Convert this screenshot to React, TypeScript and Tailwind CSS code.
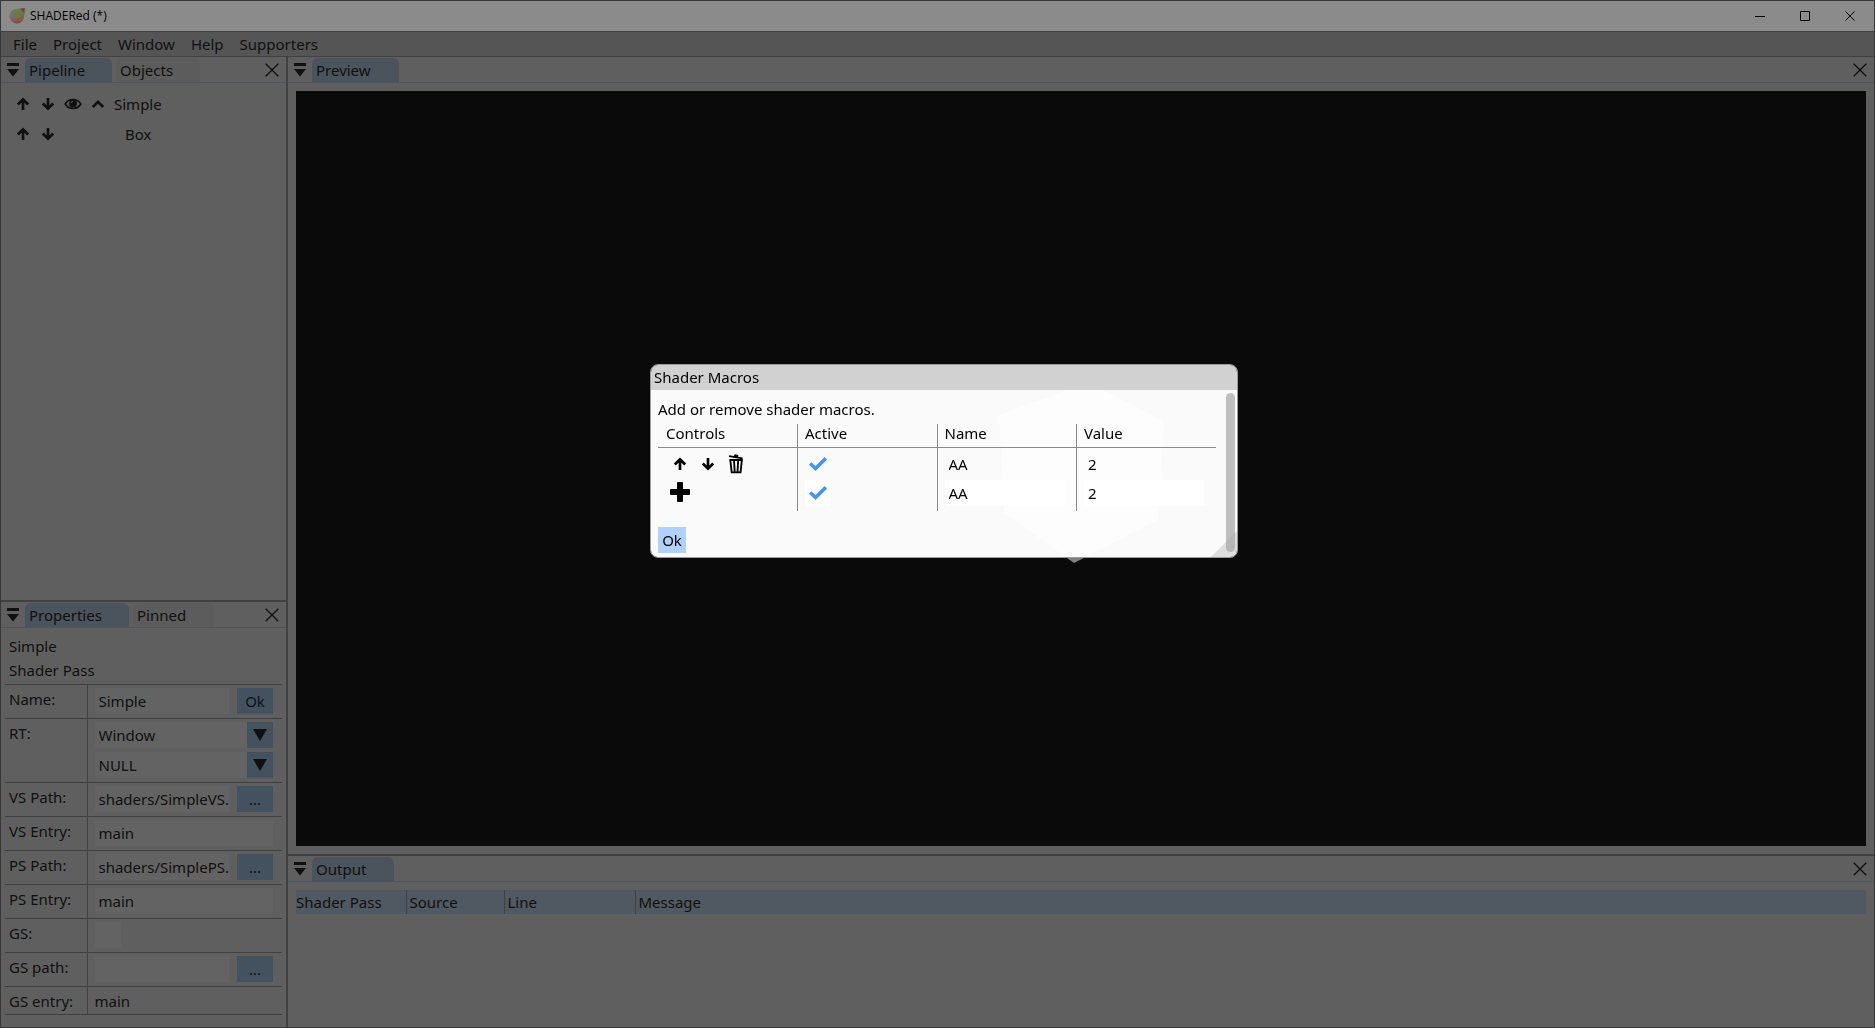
import React from "react";

type IconProps = { className?: string };

const ArrowUp = ({ className = "" }: IconProps) => (
  <svg viewBox="0 0 14 14" className={className} fill="none" stroke="currentColor" strokeWidth="2.7" aria-hidden="true">
    <path d="M7 13V2.500M1.800 7.500 7 2.300l5.200 5.200" />
  </svg>
);

const ArrowDown = ({ className = "" }: IconProps) => (
  <svg viewBox="0 0 14 14" className={className} fill="none" stroke="currentColor" strokeWidth="2.7" aria-hidden="true">
    <path d="M7 1v10.500M1.800 6.500 7 11.700l5.200-5.200" />
  </svg>
);

const Eye = ({ className = "" }: IconProps) => (
  <svg viewBox="0 0 18 12" className={className} aria-hidden="true">
    <path d="M1.2 6C3 3 5.8 1.5 9 1.5S15 3 16.8 6C15 9 12.2 10.5 9 10.5S3 9 1.2 6Z" fill="none" stroke="currentColor" strokeWidth="1.7" />
    <circle cx="9" cy="5.4" r="3.9" fill="currentColor" />
    <path d="M7 5.2A2 2 0 0 1 9 3.3" fill="none" stroke="#5f5f5f" strokeWidth="1" />
  </svg>
);

const ChevronUp = ({ className = "" }: IconProps) => (
  <svg viewBox="0 0 14 14" className={className} fill="none" stroke="currentColor" strokeWidth="2.7" aria-hidden="true">
    <path d="M1.8 10 7 4.8 12.2 10" />
  </svg>
);

const Trash = ({ className = "" }: IconProps) => (
  <svg viewBox="0 0 16 20" className={className} aria-hidden="true">
    <path d="M1 2.2 14.6 4.4M6.2 1.2l4 .7" fill="none" stroke="currentColor" strokeWidth="1.8" />
    <path d="M1.4 6h13.4M2.3 6l1.4 12.4h8.8L13.9 6M6 6l.7 12M10.2 6l-.7 12" fill="none" stroke="currentColor" strokeWidth="1.9" />
  </svg>
);

const Plus = ({ className = "" }: IconProps) => (
  <svg viewBox="0 0 20 20" className={className} fill="currentColor" aria-hidden="true">
    <path d="M8 0h4q1 0 1 1v6h6q1 0 1 1v4q0 1-1 1h-6v6q0 1-1 1H8q-1 0-1-1v-6H1q-1 0-1-1V8q0-1 1-1h6V1q0-1 1-1Z" />
  </svg>
);

const Cross = ({ className = "" }: IconProps) => (
  <svg viewBox="0 0 14 14" className={className} fill="none" stroke="currentColor" strokeWidth="1.3" aria-hidden="true">
    <path d="M.7.7l12.6 12.6M13.3.7.7 13.3" />
  </svg>
);

const DockMenu = ({ className = "" }: IconProps) => (
  <svg viewBox="0 0 12 14" className={className} fill="currentColor" aria-hidden="true">
    <path d="M0 0h12v3H0zM0 6h12L6 13.5z" />
  </svg>
);

const Logo = ({ className = "" }: IconProps) => (
  <svg viewBox="0 0 16 16" className={className} aria-hidden="true">
    <defs>
      <linearGradient id="logoBase" x1="0" y1="0.7" x2="1" y2="0.4">
        <stop offset="0" stopColor="#8a5590" />
        <stop offset="0.5" stopColor="#85604e" />
        <stop offset="1" stopColor="#6f6420" />
      </linearGradient>
      <linearGradient id="logoTop" x1="0.3" y1="0" x2="0.5" y2="1">
        <stop offset="0" stopColor="#4f9152" />
        <stop offset="0.5" stopColor="#5f8a52" stopOpacity="0.4" />
        <stop offset="1" stopColor="#8c3a2c" stopOpacity="0.7" />
      </linearGradient>
    </defs>
    <path d="M8 1c3-.2 5-.4 7.800-1C15.900 3 15.500 5 15 8a7.200 7.200 0 1 1-7-7Z" fill="url(#logoBase)" />
    <path d="M8 1c3-.2 5-.4 7.800-1C15.900 3 15.500 5 15 8a7.200 7.200 0 1 1-7-7Z" fill="url(#logoTop)" />
    <path d="M11 .8 15.800 0 15.300 5Z" fill="#7a4038" />
  </svg>
);

function TabBar({ tabs, name }: { tabs: { label: string; width: string }[]; name: string }) {
  return (
    <div className="flex h-[26px] shrink-0 items-end border-b border-[#4d565f] pl-1.5">
      <button aria-label={`${name} dock menu`} className="mr-1.5 flex h-6 w-3 items-center justify-center">
        <DockMenu className="h-3.5 w-3" />
      </button>
      <div className="flex gap-1" role="tablist">
        {tabs.map((t, i) => (
          <button
            key={t.label}
            role="tab"
            aria-selected={i === 0}
            className={`h-6 rounded-t-md pl-1 text-left ${t.width} ${i === 0 ? "bg-[#4b535d]" : "bg-[#5c5c5c]"}`}
          >
            {t.label}
          </button>
        ))}
      </div>
      <button aria-label={`Close ${name}`} className="mr-[7px] ml-auto flex h-6 w-3.5 items-center justify-center">
        <Cross className="size-3.5" />
      </button>
    </div>
  );
}

function PropRow({ label, children }: { label: string; children: React.ReactNode }) {
  return (
    <tr className="border-t border-[#414141] align-top">
      <th scope="row" className="border-r border-[#414141] pt-1 pl-1 text-left leading-5 font-normal">{label}</th>
      <td className="pt-[3px] pr-[9px] pb-1 pl-[7px]">{children}</td>
    </tr>
  );
}

function Field({ label, value }: { label: string; value: string }) {
  return <input aria-label={label} defaultValue={value} className="block h-[26px] w-full min-w-0 flex-1 bg-[#636363] pl-1 outline-none" />;
}

function SmallButton({ children, label }: { children: React.ReactNode; label?: string }) {
  return <button aria-label={label} className="h-[26px] w-9 shrink-0 bg-[#44525f]">{children}</button>;
}

function Combo({ label, value }: { label: string; value: string }) {
  return (
    <div className="relative">
      <select aria-label={label} defaultValue={value} className="block h-[26px] w-full appearance-none bg-[#636363] pl-1 outline-none">
        <option>{value}</option>
      </select>
      <span className="pointer-events-none absolute inset-y-0 right-0 flex w-[26px] items-center justify-center bg-[#44525f]">
        <svg viewBox="0 0 14 12" className="h-3 w-3.5" fill="currentColor" aria-hidden="true">
          <path d="M0 0h14L7 12z" />
        </svg>
      </span>
    </div>
  );
}

function PathField({ label, value }: { label: string; value: string }) {
  return (
    <div className="flex gap-2">
      <Field label={label} value={value} />
      <SmallButton label={`Browse ${label}`}>...</SmallButton>
    </div>
  );
}

function IconButton({ label, children }: { label: string; children: React.ReactNode }) {
  return <button aria-label={label} className="flex h-6 w-[25px] items-center justify-center">{children}</button>;
}

function Tick({ label, boxed }: { label: string; boxed?: boolean }) {
  return (
    <label className={`relative flex size-[26px] items-center justify-center ${boxed ? "bg-white" : ""}`}>
      <input type="checkbox" defaultChecked aria-label={label} className="peer absolute inset-0 appearance-none" />
      <svg viewBox="0 0 18 14" className="pointer-events-none h-3.5 w-[18px] text-[#4296fa] opacity-0 peer-checked:opacity-100" fill="none" stroke="currentColor" strokeWidth="3.6" aria-hidden="true">
        <path d="M1.200 6.500l5.300 5L16.800 1.400" />
      </svg>
    </label>
  );
}

function MacroDialog() {
  const cell = "border-l border-[#8a8a8a] pl-[7px]";
  const input = "block h-[26px] w-[120px] pl-1 outline-none";
  return (
    <section role="dialog" aria-label="Shader Macros" className="fixed top-[364px] left-[650px] w-[588px] overflow-hidden rounded-lg border border-[#9a9a9a] text-black">
      <h2 className="h-[25px] bg-[#d1d1d1] pl-[3px] leading-6">Shader Macros</h2>
      <div className="bg-white/98 pt-[7px] pr-[21px] pb-1 pl-[7px]">
        <p className="mb-[3px] leading-6">Add or remove shader macros.</p>
        <table className="w-full table-fixed border-collapse">
          <thead>
            <tr className="h-[23px] border-b border-[#8a8a8a] text-left">
              <th className="pb-1 pl-2 leading-[18px] font-normal">Controls</th>
              <th className={`${cell} pb-1 leading-[18px] font-normal`}>Active</th>
              <th className={`${cell} pb-1 leading-[18px] font-normal`}>Name</th>
              <th className={`${cell} pb-1 leading-[18px] font-normal`}>Value</th>
            </tr>
          </thead>
          <tbody>
            <tr className="h-[33px]">
              <td className="pl-[9px]">
                <div className="flex gap-[3px]">
                  <IconButton label="Move macro up"><ArrowUp className="size-3.5" /></IconButton>
                  <IconButton label="Move macro down"><ArrowDown className="size-3.5" /></IconButton>
                  <IconButton label="Delete macro"><Trash className="h-5 w-4" /></IconButton>
                </div>
              </td>
              <td className={cell}><Tick label="Macro active" /></td>
              <td className={cell}><input aria-label="Macro name" defaultValue="AA" className={`${input} bg-transparent`} /></td>
              <td className={cell}><input aria-label="Macro value" defaultValue="2" className={`${input} bg-transparent`} /></td>
            </tr>
            <tr className="h-[31px] align-top">
              <td className="pl-[9px]"><IconButton label="Add macro"><Plus className="size-5" /></IconButton></td>
              <td className={cell}><Tick label="New macro active" boxed /></td>
              <td className={cell}><input aria-label="New macro name" defaultValue="AA" className={`${input} bg-white`} /></td>
              <td className={cell}><input aria-label="New macro value" defaultValue="2" className={`${input} bg-white`} /></td>
            </tr>
          </tbody>
        </table>
        <button className="mt-4 block h-[26px] w-7 bg-[#b0d1fb]">Ok</button>
      </div>
      <div className="absolute top-7 right-0.5 bottom-[5px] w-[9px] rounded-md bg-[#bfbfbf]" />
      <svg viewBox="0 0 26 26" className="absolute right-0 bottom-0 size-[26px]" fill="#a8a8a8" fillOpacity="0.35" aria-hidden="true">
        <path d="M26 0v26H0z" />
      </svg>
    </section>
  );
}

export default function App() {
  return (
    <div className="flex h-screen flex-col border border-[#383838] bg-[#5f5f5f] font-['Noto_Sans',sans-serif] text-[15px] leading-6 text-[#101010]">
      <header className="flex h-[30px] shrink-0 items-center bg-[#8b8b8b] pr-px pl-2 text-black">
        <Logo className="size-4" />
        <h1 className="ml-[5px] font-['Open_Sans',sans-serif] text-xs">SHADERed (*)</h1>
        <div className="ml-auto flex">
          <button aria-label="Minimize" className="flex h-[30px] w-[45px] items-center justify-center">
            <svg viewBox="0 0 10 10" className="size-2.5" stroke="currentColor" aria-hidden="true"><path d="M0 5.500h10" /></svg>
          </button>
          <button aria-label="Maximize" className="flex h-[30px] w-[45px] items-center justify-center">
            <svg viewBox="0 0 10 10" className="size-2.5" fill="none" stroke="currentColor" aria-hidden="true"><path d="M.5.5h9v9h-9z" /></svg>
          </button>
          <button aria-label="Close window" className="flex h-[30px] w-[46px] items-center justify-center">
            <Cross className="size-2.5" />
          </button>
        </div>
      </header>
      <nav className="flex h-[26px] shrink-0 items-center gap-4 border-y border-[#414141] bg-[#555555] pl-3">
        {["File", "Project", "Window", "Help", "Supporters"].map((m) => (
          <button key={m}>{m}</button>
        ))}
      </nav>

      <main className="flex min-h-0 flex-1">
        <aside className="flex w-[287px] shrink-0 flex-col border-r-2 border-[#414141]">
          <section aria-label="Pipeline" className="flex min-h-0 flex-1 flex-col">
            <TabBar name="Pipeline" tabs={[{ label: "Pipeline", width: "w-[87px]" }, { label: "Objects", width: "w-[84px]" }]} />
            <ul className="pt-1.5 pl-[9px]">
              <li className="flex h-[30px] items-center">
                <IconButton label="Move Simple up"><ArrowUp className="size-3.5" /></IconButton>
                <IconButton label="Move Simple down"><ArrowDown className="size-3.5" /></IconButton>
                <IconButton label="Toggle Simple visibility"><Eye className="h-3 w-[18px]" /></IconButton>
                <IconButton label="Collapse Simple"><ChevronUp className="size-3.5" /></IconButton>
                <span className="pl-1">Simple</span>
              </li>
              <li className="flex h-[30px] items-center">
                <IconButton label="Move Box up"><ArrowUp className="size-3.5" /></IconButton>
                <IconButton label="Move Box down"><ArrowDown className="size-3.5" /></IconButton>
                <span className="pl-[65px]">Box</span>
              </li>
            </ul>
          </section>

          <section aria-label="Properties" className="shrink-0 border-t-2 border-[#414141] pb-3">
            <TabBar name="Properties" tabs={[{ label: "Properties", width: "w-[104px]" }, { label: "Pinned", width: "w-[81px]" }]} />
            <div className="pt-1.5 pr-1 pl-1">
              <p className="pl-1">Simple</p>
              <p className="mb-0.5 pl-1">Shader Pass</p>
              <table className="w-full table-fixed border-collapse border-b border-[#414141]">
                <colgroup>
                  <col className="w-[82px]" />
                  <col />
                </colgroup>
                <tbody>
                  <PropRow label="Name:">
                    <div className="flex gap-2">
                      <Field label="Name" value="Simple" />
                      <SmallButton>Ok</SmallButton>
                    </div>
                  </PropRow>
                  <PropRow label="RT:">
                    <div className="flex flex-col gap-1">
                      <Combo label="Render target 1" value="Window" />
                      <Combo label="Render target 2" value="NULL" />
                    </div>
                  </PropRow>
                  <PropRow label="VS Path:"><PathField label="VS path" value="shaders/SimpleVS.hlsl" /></PropRow>
                  <PropRow label="VS Entry:"><Field label="VS entry" value="main" /></PropRow>
                  <PropRow label="PS Path:"><PathField label="PS path" value="shaders/SimplePS.hlsl" /></PropRow>
                  <PropRow label="PS Entry:"><Field label="PS entry" value="main" /></PropRow>
                  <PropRow label="GS:">
                    <input type="checkbox" aria-label="GS" className="block size-[26px] appearance-none bg-[#636363]" />
                  </PropRow>
                  <PropRow label="GS path:"><PathField label="GS path" value="" /></PropRow>
                  <PropRow label="GS entry:"><span className="block h-5 leading-[22px]">main</span></PropRow>
                </tbody>
              </table>
            </div>
          </section>
        </aside>

        <div className="flex min-w-0 flex-1 flex-col">
          <section aria-label="Preview" className="flex min-h-0 flex-1 flex-col">
            <TabBar name="Preview" tabs={[{ label: "Preview", width: "w-[87px]" }]} />
            <div className="mx-2 my-2 flex flex-1 items-center justify-center bg-[#0a0a0a]">
              <svg viewBox="0 0 165 181" className="mt-2 h-[181px] w-[165px]" fill="#808080" aria-label="Rendered box" role="img">
                <path d="M89 0 0 33l5 98 70 50 84-43 6-99z" />
              </svg>
            </div>
          </section>
          <section aria-label="Output" className="h-[173px] shrink-0 border-t-2 border-[#414141]">
            <TabBar name="Output" tabs={[{ label: "Output", width: "w-[82px]" }]} />
            <div className="px-2 pt-2">
              <table className="w-full table-fixed border-collapse bg-[#505861]">
                <thead>
                  <tr className="h-6 text-left">
                    <th className="w-[110px] font-normal">Shader Pass</th>
                    <th className="w-[98px] border-l border-[#414141] pl-[3px] font-normal">Source</th>
                    <th className="w-[131px] border-l border-[#414141] pl-[3px] font-normal">Line</th>
                    <th className="border-l border-[#414141] pl-[3px] font-normal">Message</th>
                  </tr>
                </thead>
              </table>
            </div>
          </section>
        </div>
      </main>
      <MacroDialog />
    </div>
  );
}
